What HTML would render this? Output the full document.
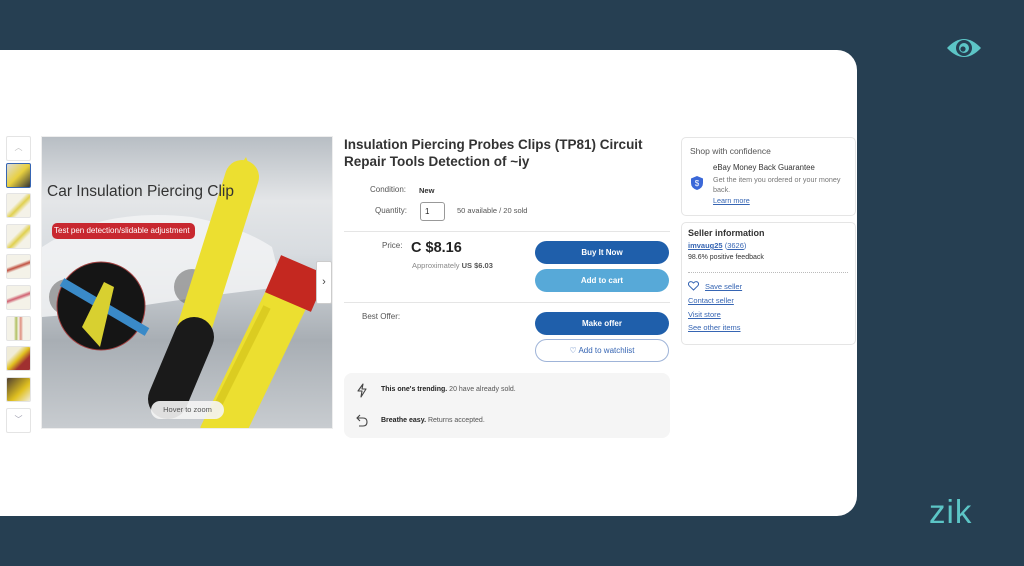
<!DOCTYPE html>
<html><head><meta charset="utf-8"><style>
*{margin:0;padding:0;box-sizing:border-box}
body{width:1024px;height:566px;background:#263f52;font-family:"Liberation Sans",sans-serif;position:relative;overflow:hidden;color:#222}
.card{position:absolute;left:0;top:50px;width:857px;height:466px;background:#fff;border-radius:0 20px 20px 0}
.a{position:absolute}
.th{position:absolute;left:6px;width:25px;height:25px;border:1px solid #e4e4e4;border-radius:2px;background:#f3f1ea}
.btn{position:absolute;left:535px;width:134px;height:23px;border-radius:12px;color:#fff;font-size:8px;font-weight:bold;text-align:center;line-height:23px}
.lk{color:#3665b3;text-decoration:underline;font-size:7.5px}
</style></head><body>
<div class="card"></div>
<!-- eye -->
<svg class="a" style="left:946px;top:35px" width="36" height="26" viewBox="0 0 36 26"><path d="M1 13 Q18 -5 35 13 Q18 31 1 13Z" fill="#5cc5c6"/><circle cx="18" cy="13" r="8" fill="#263f52"/><circle cx="18" cy="13" r="5" fill="#5cc5c6"/><circle cx="17" cy="14" r="2.6" fill="#263f52"/></svg>
<div class="a" style="left:929px;top:492px;font-size:33px;color:#5cc5c6;letter-spacing:1px;line-height:40px">zik</div>

<!-- thumbnails -->
<div class="th" style="top:136px;background:#fff;color:#bbb;font-size:8px;text-align:center;line-height:22px">︿</div>
<div class="th" style="top:163px;border:1px solid #3665b3;background:linear-gradient(135deg,#ddd,#e8d040 50%,#333)"></div>
<div class="th" style="top:193px;background:linear-gradient(135deg,#f4f2e8 40%,#e0d050 55%,#f4f2e8 70%)"></div>
<div class="th" style="top:224px;background:linear-gradient(135deg,#f4f2e8 40%,#e0d050 55%,#f4f2e8 70%)"></div>
<div class="th" style="top:254px;background:linear-gradient(160deg,#f4f2e8 40%,#c05040 50%,#f4f2e8 60%)"></div>
<div class="th" style="top:285px;background:linear-gradient(160deg,#f4f2e8 40%,#d06070 50%,#f4f2e8 60%)"></div>
<div class="th" style="top:316px;background:linear-gradient(90deg,#f4f2e8 30%,#b0c060 40%,#f4f2e8 50%,#e09080 60%,#f4f2e8 70%)"></div>
<div class="th" style="top:346px;background:linear-gradient(135deg,#f0ecd8 30%,#e0c020 50%,#a03030 70%)"></div>
<div class="th" style="top:377px;background:linear-gradient(135deg,#504030,#e0c020 60%,#f0ecd8)"></div>
<div class="th" style="top:408px;background:#fff;color:#99a;font-size:8px;text-align:center;line-height:22px">﹀</div>

<!-- main image -->
<div class="a" style="left:41px;top:136px;width:292px;height:293px;overflow:hidden;background:linear-gradient(180deg,#b8bec4 0%,#e4e6e8 22%,#d8dce0 40%,#a8aeb4 70%,#c8ccd0 100%);border:1px solid #eee">
 <svg class="a" style="left:0;top:0" width="292" height="293" viewBox="0 0 292 293">
  <path d="M0 110 Q60 70 150 80 Q200 90 230 110 L240 150 Q150 160 60 175 L0 180Z" fill="#f2f3f4" opacity=".85"/>
  <circle cx="25" cy="160" r="18" fill="#555" opacity=".5"/>
  <circle cx="150" cy="150" r="18" fill="#555" opacity=".5"/>
  <circle cx="59" cy="169" r="44" fill="#151515" stroke="#a04040" stroke-width="1"/>
  <line x1="20" y1="145" x2="105" y2="195" stroke="#3a8ac8" stroke-width="9"/>
  <path d="M40 190 L62 145 L72 150 L58 210Z" fill="#d8d030"/>
  <line x1="200" y1="40" x2="140" y2="230" stroke="#ecdf30" stroke-width="34" stroke-linecap="round"/>
  <path d="M190 42 L204 20 L214 46Z" fill="#ecdf30"/>
  <line x1="152" y1="200" x2="126" y2="262" stroke="#1a1a1a" stroke-width="40" stroke-linecap="round"/>
  <line x1="250" y1="150" x2="178" y2="300" stroke="#ecdf30" stroke-width="44"/>
  <line x1="262" y1="128" x2="246" y2="165" stroke="#c42820" stroke-width="50"/>
  <line x1="225" y1="170" x2="170" y2="280" stroke="#d0c018" stroke-width="8" opacity=".6"/>
 </svg>
 <div class="a" style="left:5px;top:46px;font-size:15.5px;color:#333;white-space:nowrap">Car Insulation Piercing Clip</div>
 <div class="a" style="left:10px;top:86px;width:143px;height:16px;background:#c82830;border-radius:5px;color:#fff;font-size:8px;line-height:16px;padding-left:2px;white-space:nowrap">Test pen detection/slidable adjustment</div>
 <div class="a" style="left:109px;top:264px;width:73px;height:18px;border-radius:9px;background:rgba(245,245,245,.9);color:#555;font-size:7.5px;text-align:center;line-height:18px">Hover to zoom</div>
</div>
<div class="a" style="left:316px;top:261px;width:16px;height:43px;background:#fff;border:1px solid #ccc;border-radius:2px;font-size:11px;text-align:center;line-height:41px;color:#444">›</div>

<!-- middle -->
<div class="a" style="left:344px;top:136px;font-size:13.5px;font-weight:bold;color:#333;line-height:17px;width:300px">Insulation Piercing Probes Clips (TP81) Circuit Repair Tools Detection of ~iy</div>
<div class="a" style="left:370px;top:185px;font-size:8px;color:#555">Condition:</div>
<div class="a" style="left:419px;top:186px;font-size:7.5px;font-weight:bold;color:#333">New</div>
<div class="a" style="left:375px;top:206px;font-size:8px;color:#555">Quantity:</div>
<div class="a" style="left:420px;top:202px;width:25px;height:19px;border:1px solid #999;border-radius:3px;font-size:8px;padding:4px 0 0 4px">1</div>
<div class="a" style="left:457px;top:206px;font-size:7.5px;color:#555">50 available / 20 sold</div>
<div class="a" style="left:344px;top:231px;width:326px;border-top:1px solid #e5e5e5"></div>
<div class="a" style="left:382px;top:241px;font-size:8px;color:#555">Price:</div>
<div class="a" style="left:411px;top:240px;font-size:14.5px;font-weight:bold;color:#222">C $8.16</div>
<div class="a" style="left:412px;top:261px;font-size:7.5px;color:#888">Approximately <b style="color:#555">US $6.03</b></div>
<div class="btn" style="top:241px;background:#1f5fab">Buy It Now</div>
<div class="btn" style="top:269px;background:#57a9d8">Add to cart</div>
<div class="a" style="left:344px;top:302px;width:326px;border-top:1px solid #e5e5e5"></div>
<div class="a" style="left:362px;top:312px;font-size:8px;color:#555">Best Offer:</div>
<div class="btn" style="top:312px;background:#1f5fab">Make offer</div>
<div class="btn" style="top:339px;background:#fff;border:1px solid #9fb4d8;color:#3665b3;font-weight:normal;line-height:21px">♡ Add to watchlist</div>
<div class="a" style="left:344px;top:373px;width:326px;height:65px;background:#f5f5f5;border-radius:8px"></div>
<svg class="a" style="left:356px;top:383px" width="12" height="15" viewBox="0 0 12 15"><path d="M7 1 L2 8 H6 L5 14 L10 6 H6 Z" fill="none" stroke="#444" stroke-width="1.1" stroke-linejoin="round"/></svg>
<svg class="a" style="left:356px;top:414px" width="12" height="13" viewBox="0 0 12 13"><path d="M4 1 L1 4 L4 7 M1 4 H7 Q11 4 11 8 Q11 12 7 12 H3" fill="none" stroke="#444" stroke-width="1.1"/></svg>
<div class="a" style="left:381px;top:386px;font-size:7px;color:#555"><b style="color:#222">This one's trending.</b> 20 have already sold.</div>
<div class="a" style="left:381px;top:417px;font-size:7px;color:#555"><b style="color:#222">Breathe easy.</b> Returns accepted.</div>

<!-- right -->
<div class="a" style="left:681px;top:137px;width:175px;height:79px;border:1px solid #e5e5e5;border-radius:5px"></div>
<div class="a" style="left:690px;top:146px;font-size:8.5px;color:#555">Shop with confidence</div>
<div class="a" style="left:713px;top:163px;font-size:7.8px;color:#333">eBay Money Back Guarantee</div>
<div class="a" style="left:713px;top:175px;font-size:7.2px;color:#777;width:130px;line-height:9.5px">Get the item you ordered or your money back.</div>
<div class="a lk" style="left:713px;top:196px;font-size:7.2px">Learn more</div>
<svg class="a" style="left:691px;top:176px" width="12" height="14" viewBox="0 0 12 14"><path d="M6 0 L12 2.5 V7 Q12 12 6 14 Q0 12 0 7 V2.5Z" fill="#3b68d8"/><text x="6" y="10" font-size="8" fill="#fff" text-anchor="middle" font-family="Liberation Sans">$</text></svg>
<div class="a" style="left:681px;top:222px;width:175px;height:123px;border:1px solid #e5e5e5;border-radius:5px"></div>
<div class="a" style="left:688px;top:228px;font-size:9px;font-weight:bold;color:#333">Seller information</div>
<div class="a" style="left:688px;top:241px;font-size:7.5px"><span class="lk" style="font-weight:bold">imvaug25</span> <span style="color:#3665b3">(<u>3626</u>)</span></div>
<div class="a" style="left:688px;top:254px;font-size:7px;color:#333">98.6% positive feedback</div>
<div class="a" style="left:688px;top:272px;width:160px;border-top:1px dotted #bbb"></div>
<svg class="a" style="left:688px;top:281px" width="11" height="10" viewBox="0 0 11 10"><path d="M5.5 9 L1.2 4.8 Q-0.5 2.5 1.5 1 Q3.5 0 5.5 2 Q7.5 0 9.5 1 Q11.5 2.5 9.8 4.8Z" fill="none" stroke="#3665b3" stroke-width="1"/></svg>
<div class="a lk" style="left:705px;top:282px">Save seller</div>
<div class="a lk" style="left:688px;top:296px">Contact seller</div>
<div class="a lk" style="left:688px;top:310px">Visit store</div>
<div class="a lk" style="left:688px;top:323px">See other items</div>
</body></html>
